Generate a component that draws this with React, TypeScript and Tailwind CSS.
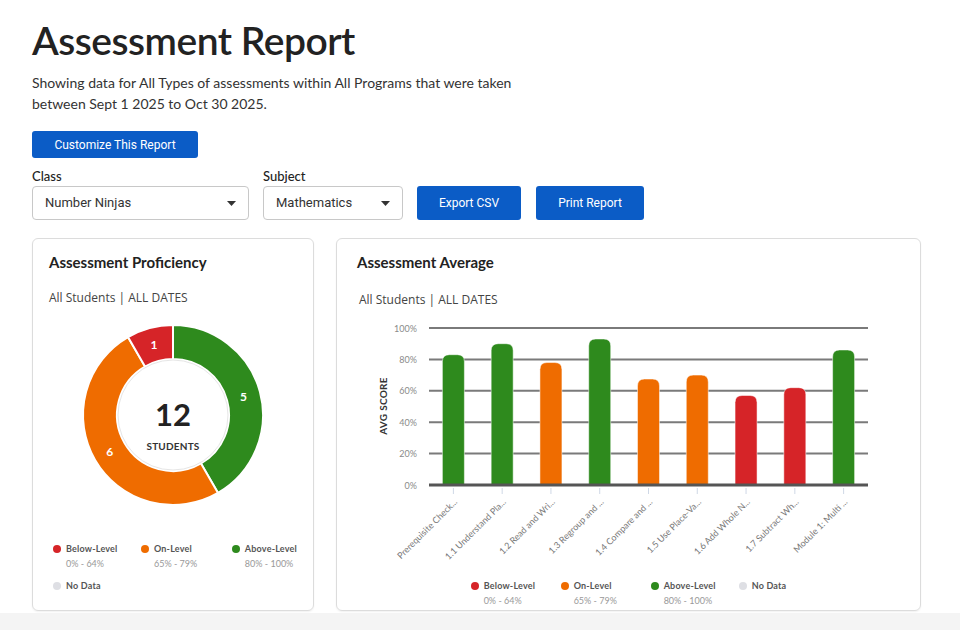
import React from "react";

const GREEN = "#2e8a1d";
const ORANGE = "#ef6c00";
const RED = "#d62428";
const BLUE = "#0b5cc6";

function arcPath(cx: number, cy: number, R: number, r: number, a0: number, a1: number) {
  const rad = (d: number) => (d * Math.PI) / 180;
  const p = (rr: number, a: number) => [cx + rr * Math.sin(rad(a)), cy - rr * Math.cos(rad(a))];
  const large = a1 - a0 > 180 ? 1 : 0;
  const [x0, y0] = p(R, a0);
  const [x1, y1] = p(R, a1);
  const [x2, y2] = p(r, a1);
  const [x3, y3] = p(r, a0);
  return `M${x0} ${y0} A${R} ${R} 0 ${large} 1 ${x1} ${y1} L${x2} ${y2} A${r} ${r} 0 ${large} 0 ${x3} ${y3} Z`;
}

function Donut() {
  const cx = 93, cy = 93, R = 90, r = 56;
  const segs = [
    { a0: 0, a1: 150, c: GREEN, label: "5", la: 75 },
    { a0: 150, a1: 330, c: ORANGE, label: "6", la: 240 },
    { a0: 330, a1: 360, c: RED, label: "1", la: 345 },
  ];
  const lr = 73;
  return (
    <svg width="186" height="186" viewBox="0 0 186 186" className="mx-auto block">
      {segs.map((s, i) => (
        <path key={i} d={arcPath(cx, cy, R, r, s.a0, s.a1)} fill={s.c} stroke="#fff" strokeWidth="2" />
      ))}
      <circle cx={cx} cy={cy} r={r - 1} fill="#fff" stroke="#e6e6e6" strokeWidth="1" />
      {segs.map((s, i) => (
        <text
          key={"l" + i}
          x={cx + lr * Math.sin((s.la * Math.PI) / 180)}
          y={cy - lr * Math.cos((s.la * Math.PI) / 180)}
          fill="#fff"
          fontSize="12"
          fontWeight="700"
          textAnchor="middle"
          dominantBaseline="central"
          fontFamily="Lato, sans-serif"
        >
          {s.label}
        </text>
      ))}
      <text x={cx} y={cy - 1} fontSize="31" fontWeight="700" fill="#222" textAnchor="middle" dominantBaseline="central" fontFamily="Lato, sans-serif">
        12
      </text>
      <text x={cx} y={cy + 31} fontSize="10" fontWeight="700" fill="#333" textAnchor="middle" dominantBaseline="central" fontFamily="Lato, sans-serif" letterSpacing="0.2">
        STUDENTS
      </text>
    </svg>
  );
}

const bars = [
  { v: 83, label: "Prerequisite Check..." },
  { v: 90, label: "1.1 Understand Pla..." },
  { v: 78, label: "1.2 Read and Wri..." },
  { v: 93, label: "1.3 Regroup and ..." },
  { v: 67.5, label: "1.4 Compare and ..." },
  { v: 70, label: "1.5 Use Place-Va..." },
  { v: 57, label: "1.6 Add Whole N..." },
  { v: 62, label: "1.7 Subtract Wh..." },
  { v: 86, label: "Module 1: Multi ..." },
];

function barColor(v: number) {
  if (v >= 80) return GREEN;
  if (v >= 65) return ORANGE;
  return RED;
}

function BarChart() {
  const x0 = 72, x1 = 511, yTop = 15, yBase = 172;
  const h = yBase - yTop;
  const cw = (x1 - x0) / bars.length;
  const bw = 22;
  const rr = 7;
  return (
    <svg width="530" height="258" viewBox="0 0 530 258" className="block">
      {[100, 80, 60, 40, 20].map((p) => {
        const y = yBase - (p / 100) * h;
        return (
          <g key={p}>
            <line x1={x0} x2={x1} y1={y} y2={y} stroke="#7a7a7a" strokeWidth="2" />
            <text x={60} y={y} fontSize="9" fill="#8a8a8a" textAnchor="end" dominantBaseline="central" fontFamily="Lato, sans-serif">
              {p}%
            </text>
          </g>
        );
      })}
      <text x={60} y={yBase} fontSize="9" fill="#8a8a8a" textAnchor="end" dominantBaseline="central" fontFamily="Lato, sans-serif">
        0%
      </text>
      <text
        x={26}
        y={93}
        transform="rotate(-90 26 93)"
        fontSize="10"
        fontWeight="700"
        fill="#333"
        textAnchor="middle"
        dominantBaseline="central"
        fontFamily="Lato, sans-serif"
        letterSpacing="0.3"
      >
        AVG SCORE
      </text>
      {bars.map((b, i) => {
        const cx = x0 + cw * (i + 0.5);
        const l = cx - bw / 2;
        const r = cx + bw / 2;
        const top = yBase - (b.v / 100) * h;
        const d = `M${l} ${yBase} L${l} ${top + rr} Q${l} ${top} ${l + rr} ${top} L${r - rr} ${top} Q${r} ${top} ${r} ${top + rr} L${r} ${yBase} Z`;
        return (
          <g key={i}>
            <path d={d} fill={barColor(b.v)} stroke="#ffffff" strokeOpacity="0.5" strokeWidth="1" />
            <line x1={cx} x2={cx} y1={175} y2={181} stroke="#cfd8e6" strokeWidth="1" />
            <text
              x={cx + 2}
              y={187}
              transform={`rotate(-45 ${cx + 2} 187)`}
              fontSize="9"
              fill="#777"
              textAnchor="end"
              dominantBaseline="central"
              fontFamily="Lato, sans-serif"
            >
              {b.label}
            </text>
          </g>
        );
      })}
      <line x1={x0} x2={x1} y1={yBase} y2={yBase} stroke="#555" strokeWidth="3" />
    </svg>
  );
}

function Dot({ c }: { c: string }) {
  return <span className="inline-block w-2 h-2 rounded-full shrink-0" style={{ backgroundColor: c }} />;
}

function LegendItem({ c, label, range, w }: { c: string; label: string; range?: string; w?: string }) {
  return (
    <div className={(w ?? "") + " whitespace-nowrap"}>
      <div className="flex items-center gap-[5px] h-3">
        <Dot c={c} />
        <span className="text-[9px] font-bold text-[#555] leading-3 tracking-[0.2px]">{label}</span>
      </div>
      {range && <div className="text-[9px] text-[#999] leading-3 mt-[3px] pl-[13px]">{range}</div>}
    </div>
  );
}

function Caret() {
  return (
    <svg width="9" height="5" viewBox="0 0 9 5">
      <path d="M0 0 L9 0 L4.5 5 Z" fill="#333" />
    </svg>
  );
}

export default function App() {
  return (
    <div className="w-[960px] h-[630px] bg-white flex flex-col overflow-hidden font-['Lato',sans-serif] text-[#222]">
      <div className="px-8 pt-[17px]">
        <h1 className="text-[39px] font-semibold leading-[46px] tracking-[-0.5px] text-[#222]">Assessment Report</h1>
        <p className="mt-[9px] text-[14px] leading-[21px] text-[#333]">
          Showing data for All Types of assessments within All Programs that were taken
          <br />
          between Sept 1 2025 to Oct 30 2025.
        </p>
        <button className="mt-[17px] h-[27px] w-[166px] rounded-[3px] text-white text-[12px] font-['Roboto',sans-serif]" style={{ backgroundColor: BLUE }}>
          Customize This Report
        </button>
        <div className="flex items-end mt-[10px]">
          <div className="w-[217px]">
            <div className="text-[13px] leading-4 mb-[2px] font-medium text-[#222]">Class</div>
            <div className="h-[34px] border border-[#c8c8c8] rounded-[4px] flex items-center justify-between pl-3 pr-3 text-[13px] text-[#333] font-['Roboto',sans-serif]">
              <span>Number Ninjas</span>
              <Caret />
            </div>
          </div>
          <div className="w-[140px] ml-[14px]">
            <div className="text-[13px] leading-4 mb-[2px] font-medium text-[#222]">Subject</div>
            <div className="h-[34px] border border-[#c8c8c8] rounded-[4px] flex items-center justify-between pl-3 pr-3 text-[13px] text-[#333] font-['Roboto',sans-serif]">
              <span>Mathematics</span>
              <Caret />
            </div>
          </div>
          <button className="ml-[14px] h-[34px] w-[104px] rounded-[3px] text-white text-[12px] font-['Roboto',sans-serif]" style={{ backgroundColor: BLUE }}>
            Export CSV
          </button>
          <button className="ml-[15px] h-[34px] w-[108px] rounded-[3px] text-white text-[12px] font-['Roboto',sans-serif]" style={{ backgroundColor: BLUE }}>
            Print Report
          </button>
        </div>
        <div className="flex mt-[18px] gap-[22px]">
          <div className="w-[282px] h-[373px] border border-[#dcdcdc] rounded-[6px] shadow-[0_1px_2px_rgba(0,0,0,0.06)] px-4 pt-[13px]">
            <div className="text-[15px] font-bold leading-5 text-[#222]">Assessment Proficiency</div>
            <div className="mt-[18px] text-[12px] leading-4 text-[#444] font-['Open_Sans',sans-serif]">All Students | ALL DATES</div>
            <div className="mt-4">
              <Donut />
            </div>
            <div className="mt-[35px] ml-1 flex">
              <LegendItem c={RED} label="Below-Level" range="0% - 64%" w="w-[88px]" />
              <LegendItem c={ORANGE} label="On-Level" range="65% - 79%" w="w-[91px]" />
              <LegendItem c={GREEN} label="Above-Level" range="80% - 100%" />
            </div>
            <div className="mt-[10px] ml-1">
              <LegendItem c="#dedfe4" label="No Data" />
            </div>
          </div>
          <div className="w-[585px] h-[373px] border border-[#dcdcdc] rounded-[6px] shadow-[0_1px_2px_rgba(0,0,0,0.06)] px-5 pt-[13px]">
            <div className="text-[15px] font-bold leading-5 text-[#222]">Assessment Average</div>
            <div className="mt-[20px] ml-[2px] text-[12px] leading-4 text-[#444] font-['Open_Sans',sans-serif]">All Students | ALL DATES</div>
            <div className="mt-[5px]">
              <BarChart />
            </div>
            <div className="mt-[9px] flex justify-center">
              <LegendItem c={RED} label="Below-Level" range="0% - 64%" w="w-[90px]" />
              <LegendItem c={ORANGE} label="On-Level" range="65% - 79%" w="w-[90px]" />
              <LegendItem c={GREEN} label="Above-Level" range="80% - 100%" w="w-[88px]" />
              <LegendItem c="#dedfe4" label="No Data" />
            </div>
          </div>
        </div>
      </div>
      <div className="flex-1 mt-[2px] bg-[#f4f4f4]" />
    </div>
  );
}
